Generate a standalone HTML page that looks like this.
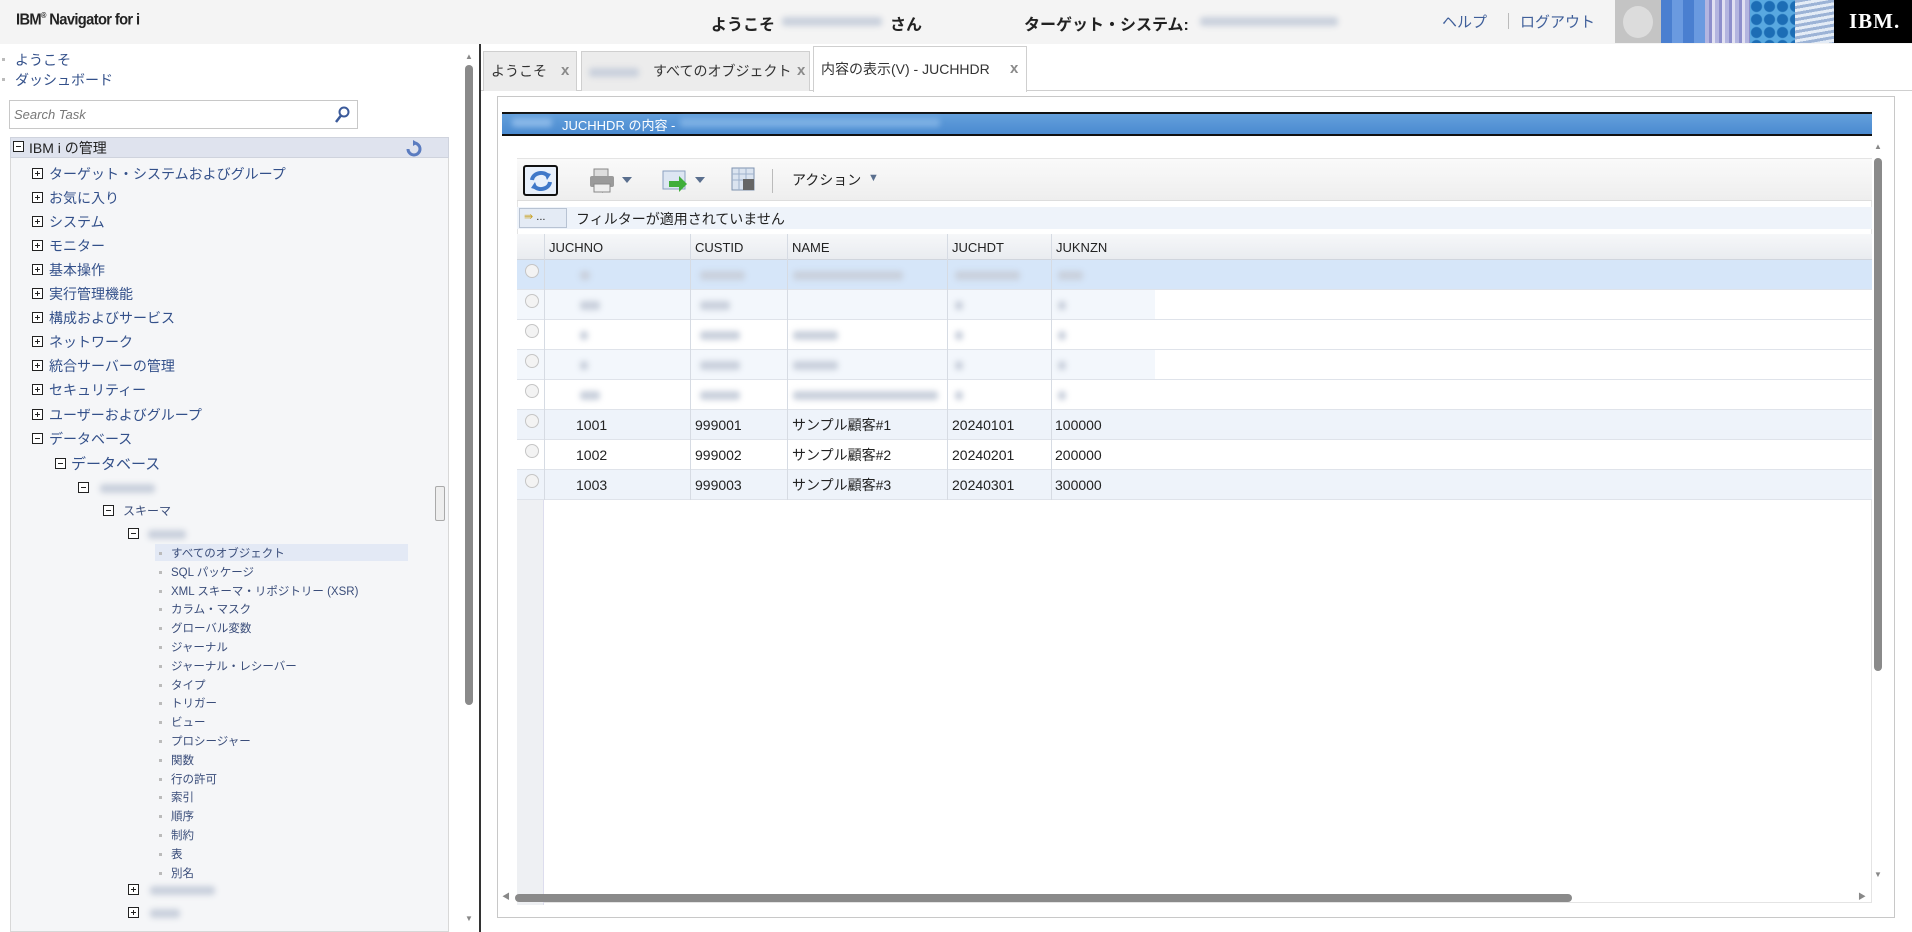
<!DOCTYPE html>
<html><head><meta charset="utf-8"><style>
*{margin:0;padding:0;box-sizing:border-box}
body{width:1912px;height:932px;overflow:hidden;background:#fff;font-family:"Liberation Sans","Noto Sans CJK JP",sans-serif;position:relative;color:#222}
.a{position:absolute;white-space:nowrap}
.blur{filter:blur(3px);background:#c9d0dc;border-radius:3px;height:9px}
.bx{position:absolute;width:11px;height:11px;border:1px solid #222;background:#fff}
.bx:before{content:"";position:absolute;left:2px;top:4px;width:5px;height:1px;background:#222}
.bx.p:after{content:"";position:absolute;left:4px;top:2px;width:1px;height:5px;background:#222}
.t1{font-size:14px;color:#33508a}
.lf{font-size:11.5px;color:#3a4d7a}
.dot{position:absolute;width:3px;height:3px;background:#bbb}
.tab{position:absolute;top:51px;height:40px;background:#ececec;border:1px solid #cfcfcf;border-bottom:none;font-size:14px;line-height:38px;padding-left:7px;color:#333}
.x{position:absolute;color:#8a8a8a;font-weight:bold;font-size:15px}
.col{position:absolute;top:234px;height:266px;border-left:1px solid #d6dbe3}
.row{position:absolute;left:517px;width:1355px;height:30px;border-bottom:1px solid #dfe3ea}
.cell{position:absolute;font-size:14px;top:7px}
.rad{position:absolute;left:525px;width:14px;height:14px;border:1px solid #c5c5c5;border-radius:50%;background:#f3f3f3}
</style></head><body>
<!-- header -->
<div class="a" style="left:0;top:0;width:1912px;height:44px;background:#f4f4f4"></div>
<div class="a" style="left:16px;top:11px;font-size:16px;font-weight:bold;color:#222;letter-spacing:-0.7px;transform:scaleX(0.92);transform-origin:left">IBM<sup style="font-size:8px">®</sup> Navigator for i</div>
<div class="a" style="left:711px;top:11px;font-size:16px;font-weight:bold">ようこそ</div>
<div class="a blur" style="left:782px;top:17px;width:100px"></div>
<div class="a" style="left:890px;top:11px;font-size:16px;font-weight:bold">さん</div>
<div class="a" style="left:1024px;top:11px;font-size:16px;font-weight:bold">ターゲット・システム:</div>
<div class="a blur" style="left:1200px;top:17px;width:138px"></div>
<div class="a" style="left:1442px;top:11px;font-size:15px;color:#3f5f9a">ヘルプ</div>
<div class="a" style="left:1508px;top:13px;width:1px;height:16px;background:#bbb"></div>
<div class="a" style="left:1520px;top:11px;font-size:15px;color:#3f5f9a">ログアウト</div>
<div class="a" style="left:1615px;top:0;width:46px;height:43px;background:#c4c4c4"><div style="position:absolute;left:8px;top:6px;width:30px;height:32px;border-radius:50%;background:#dcdcdc"></div></div>
<div class="a" style="left:1661px;top:0;width:44px;height:43px;background:repeating-linear-gradient(90deg,#4a7fd0 0 11px,#6a9ae0 11px 22px)"></div>
<div class="a" style="left:1705px;top:0;width:45px;height:43px;background:repeating-linear-gradient(90deg,#b3b5e0 0 4px,#8d8fcc 4px 7px,#e0e0f2 7px 10px)"></div>
<div class="a" style="left:1750px;top:0;width:45px;height:43px;background:radial-gradient(circle,#1c6db5 5px,#58a8e0 6px);background-size:13px 13px"></div>
<div class="a" style="left:1795px;top:0;width:39px;height:43px;background:repeating-linear-gradient(170deg,#9cb3d6 0 3px,#e4ecf6 3px 6px)"></div>
<div class="a" style="left:1834px;top:0;width:78px;height:43px;background:#000"><span style="position:absolute;left:15px;top:9px;color:#fff;font-family:'Liberation Serif',serif;font-weight:bold;font-size:21px;letter-spacing:1px">IBM.</span></div>

<!-- left panel -->
<div class="a" style="left:0;top:44px;width:458px;height:888px;background:#fff"></div>
<div class="dot" style="left:2px;top:58px"></div><div class="a t1" style="left:15px;top:50px">ようこそ</div>
<div class="dot" style="left:2px;top:78px"></div><div class="a t1" style="left:15px;top:70px">ダッシュボード</div>
<div class="a" style="left:9px;top:100px;width:349px;height:29px;border:1px solid #c8c8c8;background:#fff"><span style="position:absolute;left:4px;top:6px;font-size:13px;font-style:italic;color:#777">Search Task</span>
<svg style="position:absolute;right:7px;top:5px" width="16" height="18"><circle cx="10" cy="6" r="4.5" fill="none" stroke="#3b5a9a" stroke-width="2"/><line x1="7" y1="9.5" x2="2" y2="16" stroke="#3b5a9a" stroke-width="2.5"/></svg></div>
<div class="a" style="left:10px;top:137px;width:439px;height:795px;background:#f5f6f8;border:1px solid #d8d8d8"></div>
<div class="a" style="left:10px;top:137px;width:439px;height:21px;background:#dfe3ee;border:1px solid #cfd3dd"></div>
<div class="bx" style="left:13px;top:141px"></div><div class="a" style="left:29px;top:138px;font-size:14px">IBM i の管理</div>
<svg class="a" style="left:405px;top:139px" width="18" height="18"><path d="M3 10a6 6 0 1 0 6-6" fill="none" stroke="#5b7cc0" stroke-width="3"/><path d="M8 1l5 3-5 3z" fill="#5b7cc0"/></svg>

<div class="bx p" style="left:32px;top:168px"></div><div class="a t1" style="left:49px;top:164px">ターゲット・システムおよびグループ</div>
<div class="bx p" style="left:32px;top:192px"></div><div class="a t1" style="left:49px;top:188px">お気に入り</div>
<div class="bx p" style="left:32px;top:216px"></div><div class="a t1" style="left:49px;top:212px">システム</div>
<div class="bx p" style="left:32px;top:240px"></div><div class="a t1" style="left:49px;top:236px">モニター</div>
<div class="bx p" style="left:32px;top:264px"></div><div class="a t1" style="left:49px;top:260px">基本操作</div>
<div class="bx p" style="left:32px;top:288px"></div><div class="a t1" style="left:49px;top:284px">実行管理機能</div>
<div class="bx p" style="left:32px;top:312px"></div><div class="a t1" style="left:49px;top:308px">構成およびサービス</div>
<div class="bx p" style="left:32px;top:336px"></div><div class="a t1" style="left:49px;top:332px">ネットワーク</div>
<div class="bx p" style="left:32px;top:360px"></div><div class="a t1" style="left:49px;top:356px">統合サーバーの管理</div>
<div class="bx p" style="left:32px;top:384px"></div><div class="a t1" style="left:49px;top:380px">セキュリティー</div>
<div class="bx p" style="left:32px;top:409px"></div><div class="a t1" style="left:49px;top:405px">ユーザーおよびグループ</div>
<div class="bx" style="left:32px;top:433px"></div><div class="a t1" style="left:49px;top:429px">データベース</div>
<div class="bx" style="left:55px;top:458px"></div><div class="a t1" style="left:71px;top:453px;font-size:15px">データベース</div>
<div class="bx" style="left:78px;top:482px"></div><div class="a blur" style="left:100px;top:484px;width:55px"></div>
<div class="bx" style="left:103px;top:505px"></div><div class="a lf" style="left:123px;top:502px;font-size:12px">スキーマ</div>
<div class="bx" style="left:128px;top:528px"></div><div class="a blur" style="left:148px;top:530px;width:38px"></div>
<div class="a" style="left:155px;top:544px;width:253px;height:17px;background:#e3e9f5"></div>
<div id="leaves"></div>
<div class="bx p" style="left:128px;top:884px"></div><div class="a blur" style="left:150px;top:886px;width:65px"></div>
<div class="bx p" style="left:128px;top:907px"></div><div class="a blur" style="left:150px;top:909px;width:30px"></div>
<!-- left scrollbar -->
<div class="a" style="left:458px;top:44px;width:18px;height:888px;background:#fff"></div>
<div class="a" style="left:465px;top:52px;font-size:8px;color:#888">▲</div>
<div class="a" style="left:465px;top:65px;width:8px;height:640px;background:#8a8a8a;border-radius:4px"></div>
<div class="a" style="left:465px;top:914px;font-size:8px;color:#888">▼</div>
<div class="a" style="left:435px;top:486px;width:10px;height:35px;border:1px solid #aaa;background:#eee;border-radius:2px"></div>
<div class="a" style="left:479px;top:44px;width:2px;height:888px;background:#333"></div>

<!-- tabs -->
<div class="a" style="left:481px;top:90px;width:1431px;height:1px;background:#cfcfcf"></div>
<div class="tab" style="left:483px;width:94px">ようこそ<span class="x" style="left:77px;top:0">x</span></div>
<div class="tab" style="left:581px;width:229px"><span class="blur" style="display:inline-block;width:50px;vertical-align:middle"></span>　すべてのオブジェクト<span class="x" style="left:215px;top:0">x</span></div>
<div class="tab" style="left:813px;top:46px;height:46px;width:214px;background:#fff;line-height:44px">内容の表示(V) - JUCHHDR<span class="x" style="left:196px;top:0">x</span></div>

<!-- content frame -->
<div class="a" style="left:497px;top:96px;width:1398px;height:822px;border:1px solid #c8c8c8"></div>
<div class="a" style="left:502px;top:112px;width:1370px;height:24px;background:linear-gradient(#64a0dc,#4a8ad0);border-top:2px solid #111;border-bottom:2px solid #111"></div>
<div class="a blur" style="left:512px;top:118px;width:40px;background:#8ab8e8"></div>
<div class="a" style="left:562px;top:115px;font-size:13px;color:#fff">JUCHHDR の内容 -</div>
<div class="a blur" style="left:680px;top:118px;width:260px;background:#7db0e4"></div>
<!-- grid -->
<div class="a" style="left:517px;top:158px;width:1355px;height:745px;border:1px solid #e4e4e4;background:#fff"></div>
<div class="a" style="left:517px;top:159px;width:1355px;height:42px;background:linear-gradient(#fafafa,#eeeeee);border-bottom:1px solid #ddd"></div>
<div class="a" style="left:523px;top:165px;width:35px;height:31px;border:2px solid #111;border-radius:3px;background:#e8f0fb"></div>
<svg class="a" style="left:528px;top:169px" width="26" height="24"><path d="M4 11a9 8 0 0 1 16-4" fill="none" stroke="#3f78c9" stroke-width="4"/><path d="M22 13a9 8 0 0 1-16 4" fill="none" stroke="#3f78c9" stroke-width="4"/><path d="M16 3l7 2-4 6z" fill="#3f78c9"/><path d="M10 21l-7-2 4-6z" fill="#3f78c9"/></svg>
<div class="a" style="left:602px;top:169px;width:1px;height:24px;background:#bbb"></div>
<svg class="a" style="left:588px;top:167px" width="50" height="28"><rect x="6" y="2" width="14" height="8" fill="#ddd" stroke="#888"/><rect x="2" y="9" width="24" height="11" rx="2" fill="#9a9a9a"/><rect x="6" y="17" width="16" height="8" fill="#eee" stroke="#888"/><path d="M34 10h10l-5 6z" fill="#5a6f8e"/></svg>
<svg class="a" style="left:661px;top:167px" width="50" height="28"><rect x="2" y="4" width="22" height="18" fill="#dde6f2" stroke="#8aa0c0"/><path d="M8 14h10v-5l8 8-8 8v-5H8z" fill="#3fae3a"/><path d="M34 10h10l-5 6z" fill="#5a6f8e"/></svg>
<svg class="a" style="left:730px;top:166px" width="28" height="28"><rect x="2" y="2" width="22" height="22" fill="#dbe4f0" stroke="#7f93b0"/><path d="M2 8h22M2 14h22M9 2v22M16 2v22" stroke="#9fb2cc"/><rect x="13" y="13" width="11" height="11" fill="#666"/></svg>
<div class="a" style="left:772px;top:169px;width:1px;height:24px;background:#bbb"></div>
<div class="a" style="left:792px;top:170px;font-size:14px">アクション</div>
<div class="a" style="left:868px;top:172px;font-size:11px;color:#5a6f8e">▼</div>
<div class="a" style="left:517px;top:207px;width:1355px;height:22px;background:#eef3fa"></div>
<div class="a" style="left:519px;top:208px;width:48px;height:20px;border:1px solid #b8c3d3;background:#e4ebf5;font-size:11px;padding-left:4px;line-height:17px"><span style="color:#c8a020">⇛</span> ...</div>
<div class="a" style="left:576px;top:209px;font-size:14px">フィルターが適用されていません</div>
<div class="a" style="left:517px;top:234px;width:1355px;height:26px;background:linear-gradient(#f6f7f9,#e9ecf0);border-bottom:1px solid #d0d5dd"></div>
<div class="a" style="left:517px;top:260px;width:27px;height:645px;background:#eef0f3;border-right:1px solid #dde"></div>
<div class="a" style="left:549px;top:240px;font-size:13px">JUCHNO</div>
<div class="a" style="left:695px;top:240px;font-size:13px">CUSTID</div>
<div class="a" style="left:792px;top:240px;font-size:13px">NAME</div>
<div class="a" style="left:952px;top:240px;font-size:13px">JUCHDT</div>
<div class="a" style="left:1056px;top:240px;font-size:13px">JUKNZN</div>
<div class="row" style="top:260px;background:#d6e6f9"></div>
<div class="row" style="top:290px;background:linear-gradient(90deg,#f3f7fc 0 638px,#fff 638px)"></div>
<div class="row" style="top:320px;background:#fff"></div>
<div class="row" style="top:350px;background:linear-gradient(90deg,#f3f7fc 0 638px,#fff 638px)"></div>
<div class="row" style="top:380px;background:#fff"></div>
<div class="row" style="top:410px;background:#eef3fa"><span class="cell" style="left:59px">1001</span><span class="cell" style="left:178px">999001</span><span class="cell" style="left:275px;top:5px">サンプル顧客#1</span><span class="cell" style="left:435px">20240101</span><span class="cell" style="left:538px">100000</span></div>
<div class="row" style="top:440px;background:#fff"><span class="cell" style="left:59px">1002</span><span class="cell" style="left:178px">999002</span><span class="cell" style="left:275px;top:5px">サンプル顧客#2</span><span class="cell" style="left:435px">20240201</span><span class="cell" style="left:538px">200000</span></div>
<div class="row" style="top:470px;background:#eef3fa"><span class="cell" style="left:59px">1003</span><span class="cell" style="left:178px">999003</span><span class="cell" style="left:275px;top:5px">サンプル顧客#3</span><span class="cell" style="left:435px">20240301</span><span class="cell" style="left:538px">300000</span></div>
<div class="a blur" style="left:580px;top:271px;width:10px"></div><div class="a blur" style="left:700px;top:271px;width:45px"></div><div class="a blur" style="left:793px;top:271px;width:110px"></div><div class="a blur" style="left:955px;top:271px;width:65px"></div><div class="a blur" style="left:1058px;top:271px;width:25px"></div>
<div class="a blur" style="left:580px;top:301px;width:20px"></div><div class="a blur" style="left:700px;top:301px;width:30px"></div><div class="a blur" style="left:955px;top:301px;width:8px"></div><div class="a blur" style="left:1058px;top:301px;width:8px"></div>
<div class="a blur" style="left:580px;top:331px;width:8px"></div><div class="a blur" style="left:700px;top:331px;width:40px"></div><div class="a blur" style="left:793px;top:331px;width:45px"></div><div class="a blur" style="left:955px;top:331px;width:8px"></div><div class="a blur" style="left:1058px;top:331px;width:8px"></div>
<div class="a blur" style="left:580px;top:361px;width:8px"></div><div class="a blur" style="left:700px;top:361px;width:40px"></div><div class="a blur" style="left:793px;top:361px;width:45px"></div><div class="a blur" style="left:955px;top:361px;width:8px"></div><div class="a blur" style="left:1058px;top:361px;width:8px"></div>
<div class="a blur" style="left:580px;top:391px;width:20px"></div><div class="a blur" style="left:700px;top:391px;width:40px"></div><div class="a blur" style="left:793px;top:391px;width:145px"></div><div class="a blur" style="left:955px;top:391px;width:8px"></div><div class="a blur" style="left:1058px;top:391px;width:8px"></div>
<div class="col" style="left:544px"></div><div class="col" style="left:690px"></div><div class="col" style="left:787px"></div><div class="col" style="left:947px"></div><div class="col" style="left:1051px"></div>
<div class="rad" style="top:264px"></div><div class="rad" style="top:294px"></div><div class="rad" style="top:324px"></div><div class="rad" style="top:354px"></div><div class="rad" style="top:384px"></div><div class="rad" style="top:414px"></div><div class="rad" style="top:444px"></div><div class="rad" style="top:474px"></div>
<!-- scrollbars -->
<div class="a" style="left:1874px;top:142px;font-size:8px;color:#888">▲</div>
<div class="a" style="left:1874px;top:158px;width:8px;height:513px;background:#8a8a8a;border-radius:4px"></div>
<div class="a" style="left:1874px;top:870px;font-size:8px;color:#888">▼</div>
<div class="a" style="left:502px;top:891px;font-size:8px;color:#888">◀</div>
<div class="a" style="left:515px;top:894px;width:1057px;height:8px;background:#8a8a8a;border-radius:4px"></div>
<div class="a" style="left:1858px;top:891px;font-size:8px;color:#888">▶</div>

<script>
var L=["すべてのオブジェクト","SQL パッケージ","XML スキーマ・リポジトリー (XSR)","カラム・マスク","グローバル変数","ジャーナル","ジャーナル・レシーバー","タイプ","トリガー","ビュー","プロシージャー","関数","行の許可","索引","順序","制約","表","別名"];
var h="";for(var i=0;i<L.length;i++){var y=545+i*18.8;h+='<div class="dot" style="left:159px;top:'+(y+7)+'px"></div><div class="a lf" style="left:171px;top:'+y+'px">'+L[i]+'</div>';}
document.getElementById("leaves").innerHTML=h;
</script>
</body></html>
